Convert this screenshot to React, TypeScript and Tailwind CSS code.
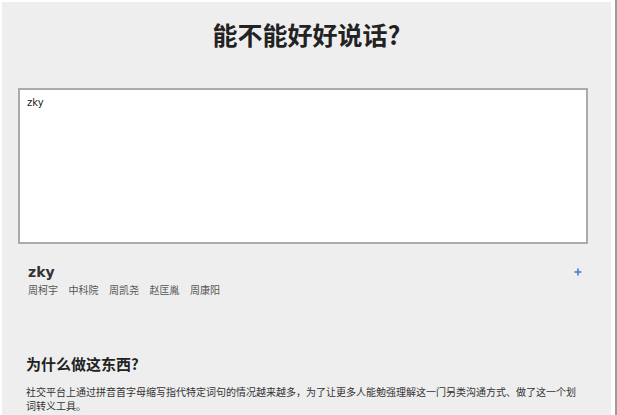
import React from "react";

const font = { fontFamily: '"DejaVu Sans", "Noto Sans CJK SC", sans-serif' };

export default function App() {
  const tags = ["周柯宇", "中科院", "周凯尧", "赵匡胤", "周康阳"];
  return (
    <div className="flex h-[415px] w-[617px] overflow-hidden bg-white" style={font}>
      <div className="mt-[2px] ml-[2px] flex w-[609px] flex-col bg-[#eeeeee]">
        <h1 className="mt-[17px] text-center text-[25px] font-bold leading-[30px] text-[#222222] [font-family:'Noto_Sans_CJK_SC',sans-serif]">
          能不能好好说话?
        </h1>
        <textarea
          defaultValue="zky"
          className="ml-[16px] mt-[39px] h-[156px] w-[570px] resize-none border-2 border-[#ababab] bg-white px-[7px] py-[6px] text-[10px] leading-[14px] text-[#222] outline-none"
        />
        <div className="mt-[20px] ml-[26px] mr-[29px] flex items-start justify-between">
          <div className="flex flex-col">
            <div className="text-[14px] font-bold leading-[16px] text-[#333]">zky</div>
            <div className="mt-[3px] flex gap-[10.5px] text-[10px] leading-[14px] text-[#555] [font-family:'Noto_Sans_CJK_SC',sans-serif]">
              {tags.map((t) => (
                <span key={t}>{t}</span>
              ))}
            </div>
          </div>
          <svg width="8" height="8" viewBox="0 0 8 8" className="mt-[4px]">
            <path d="M4 0.5V7.5M0.5 4H7.5" stroke="#3d7be0" strokeWidth="1.6" />
          </svg>
        </div>
        <h2 className="mt-[57px] ml-[24px] text-[15px] font-bold leading-[20px] text-[#222] [font-family:'Noto_Sans_CJK_SC',sans-serif]">
          为什么做这东西?
        </h2>
        <p className="mt-[11px] ml-[24px] w-[556px] text-[10px] leading-[14px] text-[#333] [font-family:'Noto_Sans_CJK_SC',sans-serif]">
          社交平台上通过拼音首字母缩写指代特定词句的情况越来越多，为了让更多人能勉强理解这一门另类沟通方式、做了这一个划词转义工具。
        </p>
      </div>
      <div className="ml-[4px] w-[2px] bg-[#9c9c9c]" />
    </div>
  );
}
